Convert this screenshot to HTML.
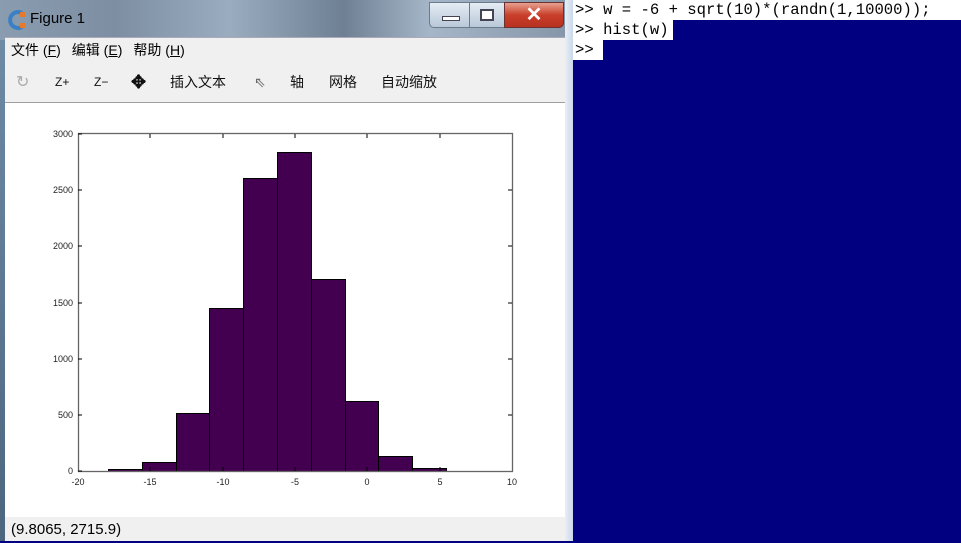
<!DOCTYPE html>
<html><head><meta charset="utf-8"><style>
body{margin:0;width:961px;height:541px;overflow:hidden;background:#000080;position:relative;font-family:"Liberation Sans","Noto Sans CJK SC",sans-serif}
.abs{position:absolute}
.con{font-family:"Liberation Mono",monospace;font-size:15.6px;color:#000;line-height:20px;padding-left:2px;box-sizing:border-box}
</style></head><body>
<div class="abs" style="left:0;top:0;width:573px;height:40px;background:linear-gradient(90deg,#8a9cb0 0%,#7d8ea3 20%,#9aacbf 40%,#6f8094 60%,#a5b6c8 75%,#8595a8 100%)"></div>
<div class="abs" style="left:0;top:40px;width:5px;height:501px;background:linear-gradient(#6f8aa5,#4c6680)"></div>
<div class="abs" style="left:565px;top:0;width:8px;height:541px;background:linear-gradient(90deg,#e8eef5,#c9d8ea)"></div>
<svg class="abs" style="left:5px;top:9px" width="22" height="22"><path d="M17 4 A8 8 0 1 0 17 18" stroke="#3b7fc4" stroke-width="4" fill="none"/><rect x="15" y="3" width="5" height="5" fill="#e8792a"/><rect x="15" y="14" width="5" height="5" fill="#e8792a"/></svg>
<div class="abs" style="left:30px;top:10px;font-size:15px;color:#000">Figure 1</div>
<div class="abs" style="left:429px;top:2px;width:40px;height:24px;border:1px solid #6b7a8c;border-radius:0 0 0 5px;background:linear-gradient(#e4ecf4,#b9c8d8)"><div style="margin:13px 12px 0;width:16px;height:3px;background:#fff;border:1px solid #445"></div></div>
<div class="abs" style="left:469px;top:2px;width:34px;height:24px;border:1px solid #6b7a8c;background:linear-gradient(#e4ecf4,#b9c8d8)"><div style="margin:6px 10px;width:10px;height:8px;border:2px solid #445;background:#fff"></div></div>
<div class="abs" style="left:504px;top:2px;width:58px;height:24px;border:1px solid #6b3030;border-radius:0 0 5px 0;background:linear-gradient(#e8a090,#c8402a 50%,#b83020);color:#fff;font-size:20px;font-weight:bold;text-align:center;line-height:24px">✕</div>
<div class="abs" style="left:5px;top:37px;width:560px;height:25px;background:#f0f0f0;border-top:1px solid #aab;border-bottom:1px solid #a0a0a0;font-size:14px;line-height:25px">
<span style="margin-left:6px">文件 (<u>F</u>)</span><span style="margin-left:11px">编辑 (<u>E</u>)</span><span style="margin-left:11px">帮助 (<u>H</u>)</span></div>
<div class="abs" style="left:5px;top:63px;width:560px;height:39px;background:#f0f0f0;border-bottom:1px solid #a0a0a0;font-size:14px;line-height:39px;color:#111">
<span class="abs" style="left:11px;color:#aaa;font-size:16px">↻</span>
<span class="abs" style="left:50px;font-size:12px">Z+</span>
<span class="abs" style="left:89px;font-size:12px">Z−</span>
<span class="abs" style="left:126px;font-size:18px;font-weight:bold">✥</span>
<span class="abs" style="left:165px">插入文本</span>
<span class="abs" style="left:249px;color:#666">⇖</span>
<span class="abs" style="left:285px">轴</span>
<span class="abs" style="left:324px">网格</span>
<span class="abs" style="left:376px">自动缩放</span>
</div>
<div class="abs" style="left:5px;top:103px;width:560px;height:414px;background:#fff"></div>
<svg class="abs" style="left:0;top:0" width="565" height="541" font-family="Liberation Sans,sans-serif" font-size="9" fill="#222">
<g fill="#430050" stroke="#000" stroke-width="1">
<rect x="108.5" y="469.5" width="34" height="2"/>
<rect x="142.5" y="462.5" width="34" height="9"/>
<rect x="176.5" y="413.5" width="33" height="58"/>
<rect x="209.5" y="308.5" width="34" height="163"/>
<rect x="243.5" y="178.5" width="34" height="293"/>
<rect x="277.5" y="152.5" width="34" height="319"/>
<rect x="311.5" y="279.5" width="34" height="192"/>
<rect x="345.5" y="401.5" width="33" height="70"/>
<rect x="378.5" y="456.5" width="34" height="15"/>
<rect x="412.5" y="468.5" width="34" height="3"/>
</g>
<rect x="78.5" y="133.5" width="434" height="338" fill="none" stroke="#666" stroke-width="1.3"/>
<g stroke="#000">
<path d="M78 471h4M78 415h4M78 359h4M78 303h4M78 246h4M78 190h4M78 134h4M512 415h-4M512 359h-4M512 303h-4M512 246h-4M512 190h-4"/>
<path d="M150 134v4M223 134v4M295 134v4M367 134v4M440 134v4M150 471v-4M223 471v-4M295 471v-4M367 471v-4M440 471v-4"/>
</g>
<g text-anchor="end"><text x="73" y="474">0</text><text x="73" y="418">500</text><text x="73" y="362">1000</text><text x="73" y="306">1500</text><text x="73" y="249">2000</text><text x="73" y="193">2500</text><text x="73" y="137">3000</text></g>
<g text-anchor="middle"><text x="78" y="485">-20</text><text x="150" y="485">-15</text><text x="223" y="485">-10</text><text x="295" y="485">-5</text><text x="367" y="485">0</text><text x="440" y="485">5</text><text x="512" y="485">10</text></g>
</svg>
<div class="abs" style="left:5px;top:517px;width:560px;height:24px;background:#f0f0f0;font-size:15px;line-height:26px"><span style="margin-left:6px">(9.8065, 2715.9)</span></div>
<div class="abs con" style="left:573px;top:0;width:388px;height:20px;background:#fff">&gt;&gt; w = -6 + sqrt(10)*(randn(1,10000));</div>
<div class="abs con" style="left:573px;top:20px;width:100px;height:20px;background:#fff">&gt;&gt; hist(w)</div>
<div class="abs con" style="left:573px;top:40px;width:30px;height:20px;background:#fff">&gt;&gt;</div>
</body></html>
